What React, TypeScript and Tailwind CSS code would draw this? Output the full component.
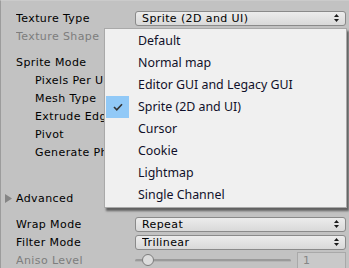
import React from 'react';

const labelFont = { fontFamily: '"DejaVu Sans", Verdana, sans-serif' };
const menuFont = { fontFamily: '"Noto Sans", "Open Sans", sans-serif' };

const Arrows: React.FC = () => (
  <svg width="5" height="8" viewBox="0 0 5 8" className="shrink-0">
    <path d="M2.5 0 L5 3 L0 3 Z" fill="#1a1a1a" />
    <path d="M2.5 8 L5 5 L0 5 Z" fill="#1a1a1a" />
  </svg>
);

const Dropdown: React.FC<{ value: string }> = ({ value }) => (
  <div className="flex-1 h-[15px] rounded-[3px] border border-[#8a8a8a] bg-gradient-to-b from-[#ececec] to-[#d9d9d9] flex items-center pl-[6px] pr-[6px] text-[11px] tracking-[0.4px] text-black leading-none">
    <span className="flex-1 truncate">{value}</span>
    <Arrows />
  </div>
);

const Row: React.FC<{ label: string; indent?: boolean; dim?: boolean; children?: React.ReactNode }> = ({ label, indent, dim, children }) => (
  <div className="flex items-center h-[18px]">
    <div className={`w-[119px] shrink-0 overflow-hidden text-[11px] tracking-[0.4px] leading-none whitespace-nowrap ${indent ? 'pl-[19px]' : ''} ${dim ? 'text-[#7d7d7d]' : 'text-black'}`}>
      {label}
    </div>
    {children}
  </div>
);

const items = [
  'Default',
  'Normal map',
  'Editor GUI and Legacy GUI',
  'Sprite (2D and UI)',
  'Cursor',
  'Cookie',
  'Lightmap',
  'Single Channel',
];

const Popup: React.FC = () => (
  <div
    className="absolute left-[103px] top-[27px] w-[243px] h-[180px] bg-[#f0f0f0] border border-[#a9a9a9] shadow-[2px_3px_2px_rgba(0,0,0,0.5)] py-[1px]"
    style={menuFont}
  >
    {items.map((it) => (
      <div key={it} className="flex items-center h-[22px]">
        <div className="w-[33px] h-full flex items-center">
          {it === 'Sprite (2D and UI)' && (
            <div className="ml-[1px] w-[23px] h-[22px] bg-[#91c9f7] flex items-center justify-center">
              <svg width="10" height="8" viewBox="0 0 10 8">
                <path d="M1 4 L3.8 6.8 L9 1.2" fill="none" stroke="#333" strokeWidth="1.6" />
              </svg>
            </div>
          )}
        </div>
        <span className="text-[12.4px] text-[#10102a] whitespace-nowrap leading-none">{it}</span>
      </div>
    ))}
  </div>
);

export default function App() {
  return (
    <div
      className="relative w-[349px] h-[268px] overflow-hidden bg-[#c2c2c2] border-l border-[#9c9c9c] border-t border-t-[#cbcbcb]"
      style={labelFont}
    >
      <div className="flex flex-col pt-[8px] pl-[15px] pr-[3px]">
        <Row label="Texture Type">
          <Dropdown value="Sprite (2D and UI)" />
        </Row>
        <Row label="Texture Shape" dim />
        <div className="h-[8px]" />
        <Row label="Sprite Mode" />
        <Row label="Pixels Per Unit" indent />
        <Row label="Mesh Type" indent />
        <Row label="Extrude Edges" indent />
        <Row label="Pivot" indent />
        <Row label="Generate Physics Shape" indent />
        <div className="h-[28px]" />
        <div className="flex items-center h-[18px] -ml-[11px]">
          <svg width="7" height="9" viewBox="0 0 7 9" className="mr-[4px]">
            <path d="M0 0 L7 4.5 L0 9 Z" fill="#858585" />
          </svg>
          <span className="text-[11px] tracking-[0.4px] leading-none text-black">Advanced</span>
        </div>
        <div className="h-[8px]" />
        <Row label="Wrap Mode">
          <Dropdown value="Repeat" />
        </Row>
        <Row label="Filter Mode">
          <Dropdown value="Trilinear" />
        </Row>
        <Row label="Aniso Level" dim>
          <div className="flex-1 flex items-center h-full">
            <div className="relative flex-1 h-[3px] rounded-full bg-[#9a9a9a] border-b border-[#b4b4b4]">
              <div className="absolute left-[7px] top-[-5px] w-[12px] h-[12px] rounded-full bg-[#dcdcdc] border border-[#7c7c7c]" />
            </div>
            <div className="ml-[6px] w-[49px] h-[17px] self-end border border-[#a9a9a9] bg-[#c9c9c9] text-[11px] text-[#858585] pl-[5px] flex items-center leading-none">
              1
            </div>
          </div>
        </Row>
      </div>
      <Popup />
    </div>
  );
}
